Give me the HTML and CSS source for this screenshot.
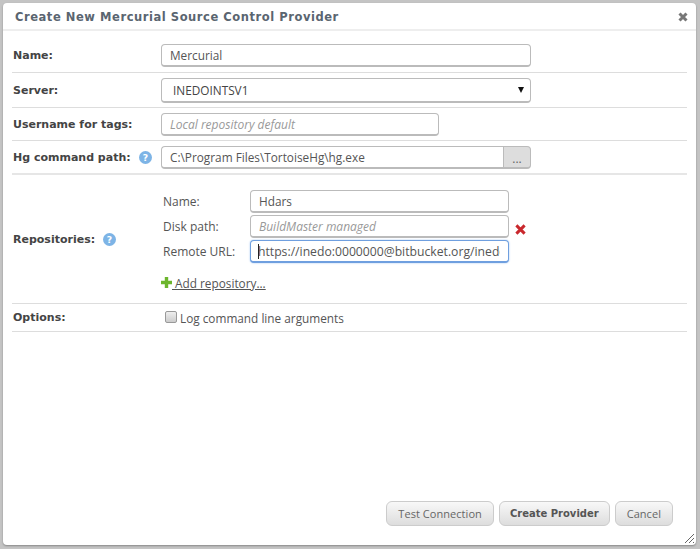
FILE: index.html
```html
<!DOCTYPE html>
<html lang="en">
<head>
    <meta charset="UTF-8">
    <title>Create New Mercurial Source Control Provider</title>
    <link rel="stylesheet" href="styles.css">
</head>
<body>
    <div class="dialog">
        <div class="title-bar">
            <h1 class="title">Create New Mercurial Source Control Provider</h1>
            <svg class="close" width="10" height="10" viewBox="0 0 10 10"><path d="M1.5 1.5l7 7M8.5 1.5l-7 7" stroke="#777" stroke-width="3"/></svg>
        </div>
        <div class="form">
            <div class="row row-name">
                <label class="label">Name:</label>
                <input class="field wide" type="text" value="Mercurial">
            </div>
            <div class="row row-server">
                <label class="label">Server:</label>
                <div class="field wide select">
                    <span>INEDOINTSV1</span>
                    <svg width="6" height="6" viewBox="0 0 6 6"><path d="M0 0h6L3 6z" fill="#111"/></svg>
                </div>
            </div>
            <div class="row row-user">
                <label class="label">Username for tags:</label>
                <input class="field medium" type="text" placeholder="Local repository default">
            </div>
            <div class="row row-hg">
                <label class="label">Hg command path:
                    <svg class="help" width="13" height="13" viewBox="0 0 14 14"><circle cx="7" cy="7" r="7" fill="#7db4e6"/><text x="7" y="10.6" text-anchor="middle" class="help-mark">?</text></svg>
                </label>
                <div class="path-group">
                    <input class="field path" type="text" value="C:\Program Files\TortoiseHg\hg.exe">
                    <span class="browse">...</span>
                </div>
            </div>
            <div class="row row-repos">
                <label class="label">Repositories:
                    <svg class="help" width="13" height="13" viewBox="0 0 14 14"><circle cx="7" cy="7" r="7" fill="#7db4e6"/><text x="7" y="10.6" text-anchor="middle" class="help-mark">?</text></svg>
                </label>
                <div class="repos">
                    <div class="repo-line">
                        <span class="repo-label">Name:</span>
                        <input class="field repo" type="text" value="Hdars">
                    </div>
                    <div class="repo-line">
                        <span class="repo-label">Disk path:</span>
                        <input class="field repo" type="text" placeholder="BuildMaster managed">
                        <svg class="remove" width="11" height="11" viewBox="0 0 12 12"><path d="M1.5 1.5l9 9M10.5 1.5l-9 9" stroke="#c9282d" stroke-width="3.2"/></svg>
                    </div>
                    <div class="repo-line">
                        <span class="repo-label">Remote URL:</span>
                        <input class="field repo focused" type="text" value="https://inedo:0000000@bitbucket.org/inedo/hdars">
                        <span class="caret"></span>
                    </div>
                    <a class="add-link" href="#"><svg width="11" height="11" viewBox="0 0 11 11"><path d="M5.5 0v11M0 5.5h11" stroke="#6cb52d" stroke-width="3.4"/></svg> Add repository...</a>
                </div>
            </div>
            <div class="row row-options">
                <label class="label">Options:</label>
                <label class="check"><span class="box"></span>Log command line arguments</label>
            </div>
        </div>
        <div class="buttons">
            <button class="btn">Test Connection</button>
            <button class="btn primary">Create Provider</button>
            <button class="btn">Cancel</button>
        </div>
        <svg class="grip" width="11" height="11" viewBox="0 0 11 11"><path d="M1 10l9-9M5 10l5-5M9 10l1-1" stroke="#666" stroke-width="1"/></svg>
    </div>
</body>
</html>
```

FILE: styles.css
```css
*{
    margin:0;
    padding:0;
    box-sizing:border-box;
}
html,body{
    height:100%;
}
body{
    background:#c4c4c4;
    padding:3px 4px 4px 3px;
    font-family:"Open Sans","DejaVu Sans",sans-serif;
    font-size:12px;
    color:#555;
    overflow:hidden;
}
.dialog{
    position:relative;
    height:542px;
    background:#fff;
    border-radius:4px;
    box-shadow:0 1px 2px #888;
    display:flex;
    flex-direction:column;
}
.title-bar{
    display:flex;
    align-items:center;
    justify-content:space-between;
    height:28px;
    padding:1px 8px 0 12px;
    border-bottom:2px solid #eee;
    flex:none;
}
.title{
    font-family:"DejaVu Sans",sans-serif;
    font-size:11.5px;
    font-weight:bold;
    color:#5a6570;
    letter-spacing:0.55px;
}
.form{
    padding:0 9px;
    flex:1;
}
.row{
    display:flex;
    align-items:center;
    border-bottom:1px solid #ddd;
}
.row-name{height:42px;padding-top:8px;}
.row-server{height:35px;}
.row-user{height:33px;}
.row-hg{height:34px;border-bottom-width:2px;border-color:#e6e6e6;}
.row-repos{height:129px;}
.row-options{height:28px;}
.label{
    flex:none;
    width:149px;
    padding-left:1px;
    font-family:"DejaVu Sans",sans-serif;
    font-size:11px;
    font-weight:bold;
    color:#444;
    display:flex;
    align-items:center;
    gap:8px;
}
.field{
    height:23px;
    border:1px solid #bbb;
    border-bottom-width:2px;
    border-radius:4px;
    padding:0 8px;
    font-family:"Open Sans","DejaVu Sans",sans-serif;
    font-size:11.8px;
    color:#555;
    background:#fff;
    outline:none;
}
.field::placeholder{
    color:#999;
    font-style:italic;
    font-size:12px;
}
.wide{width:370px;}
.medium{width:278px;}
.select{
    height:25px;
    display:flex;
    align-items:center;
    justify-content:space-between;
    padding:0 6px 0 11px;
    color:#444;
}
.path-group{
    display:flex;
    width:370px;
}
.path{
    flex:1;
    min-width:0;
    border-right:0;
    border-radius:4px 0 0 4px;
}
.browse{
    width:28px;
    height:23px;
    background:#ddd;
    border:1px solid #bbb;
    border-bottom-width:2px;
    border-radius:0 4px 4px 0;
    text-align:center;
    line-height:23px;
    color:#666;
}
.help{
    flex:none;
}
.help-mark{
    font-family:"DejaVu Sans",sans-serif;
    font-size:10px;
    font-weight:bold;
    fill:#fff;
}
.repos{
    display:flex;
    flex-direction:column;
    gap:2px;
    padding-top:3px;
}
.repo-line{
    position:relative;
    display:flex;
    align-items:center;
}
.repo-label{
    width:89px;
    padding-left:2px;
    flex:none;
}
.repo{
    width:259px;
}
.focused{
    border:1px solid #6f9fdf;
    border-bottom-width:2px;
    box-shadow:0 0 2px #9cc2f0;
    font-size:12.2px;
    padding-left:7px;
}
.caret{
    position:absolute;
    left:97px;
    top:4px;
    width:1px;
    height:15px;
    background:#222;
}
.remove{
    margin:6px 0 0 6px;
}
.add-link{
    display:block;
    color:#555;
    margin-top:10px;
    font-size:11.8px;
}
.check{
    display:flex;
    align-items:center;
    padding:1px 0 0 4px;
    font-size:11.8px;
}
.box{
    width:12px;
    height:12px;
    margin:-3px 3px 0 0;
    border:1px solid #999;
    border-radius:2px;
    background:linear-gradient(#eee,#ccc);
}
.buttons{
    display:flex;
    justify-content:flex-end;
    gap:5px;
    padding:0 23px 19px 0;
    flex:none;
}
.btn{
    height:25px;
    padding:0 11px;
    border:1px solid #ccc;
    border-radius:6px;
    background:linear-gradient(#f8f8f8,#ddd);
    font-family:"Open Sans","DejaVu Sans",sans-serif;
    font-size:11px;
    letter-spacing:0.05px;
    color:#666;
}
.primary{
    padding:0 10px;
    font-family:"DejaVu Sans",sans-serif;
    font-size:10px;
    letter-spacing:0;
    font-weight:bold;
    color:#555;
}
.grip{
    position:absolute;
    right:1px;
    bottom:1px;
}
```
